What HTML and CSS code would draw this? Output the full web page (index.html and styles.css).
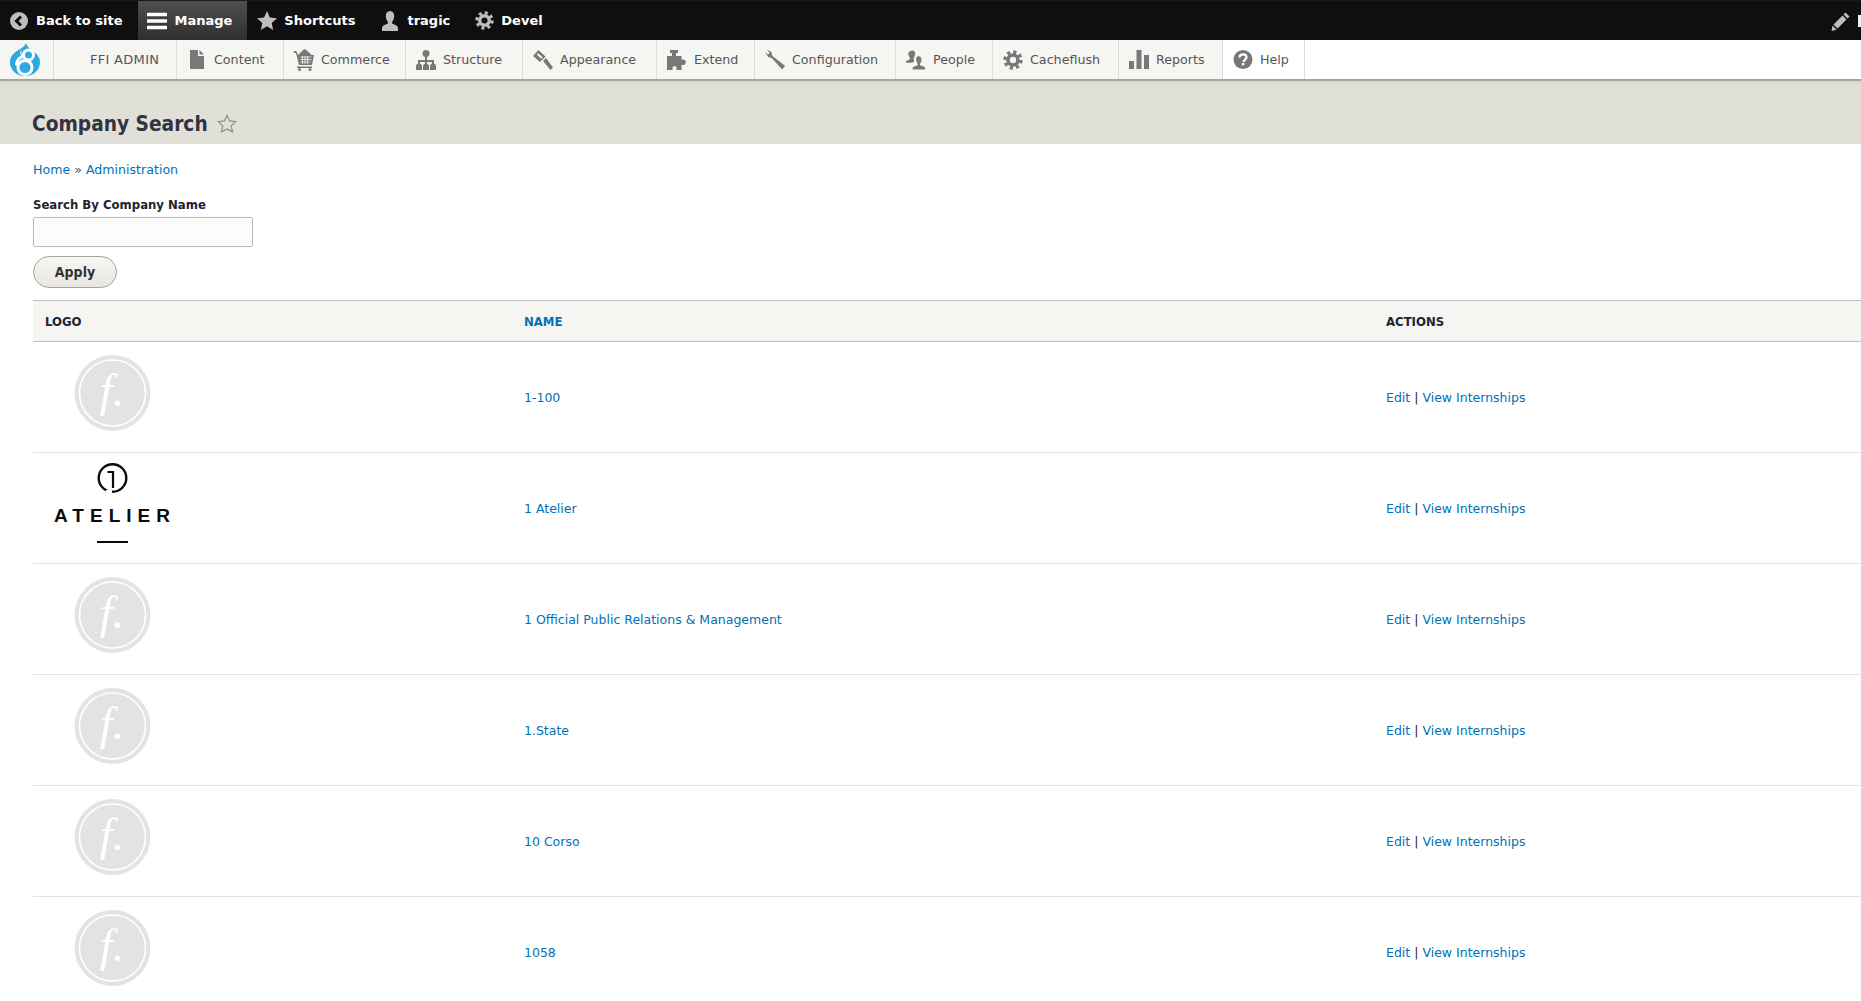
FILE: index.html
```html
<!DOCTYPE html>
<html lang="en">
<head>
    <meta charset="UTF-8" />
    <title>Company Search</title>
    <link rel="stylesheet" href="styles.css">
</head>
<body>
    <svg class="sprites" width="0" height="0">
        <symbol id="gear" viewBox="0 0 20 20">
            <circle cx="10" cy="10" r="8" fill="none" stroke="currentColor" stroke-width="3.4" stroke-dasharray="3.15 3.13"/>
            <circle cx="10" cy="10" r="5" fill="none" stroke="currentColor" stroke-width="3.6"/>
        </symbol>
        <symbol id="f-badge" viewBox="0 0 135 100">
            <circle cx="67.5" cy="50" r="37.5" fill="#e3e3e3" stroke="#e3e3e3" stroke-width="1"/>
            <circle cx="67.5" cy="50" r="33" fill="none" stroke="#fff" stroke-width="1.6"/>
        </symbol>
    </svg>

    <!-- Toolbar -->
    <nav class="toolbar">
        <a class="bar-item bar-first" href="#">
            <svg class="bar-icon" width="18" height="18" viewBox="0 0 18 18"><circle cx="9" cy="9" r="9" fill="#bebebe"/><path d="M11 4.500 6.500 9l4.500 4.500" fill="none" stroke="#0f0f0f" stroke-width="3"/></svg>
            Back to site
        </a>
        <a class="bar-item bar-active" href="#">
            <svg class="bar-icon" width="20" height="18" viewBox="0 0 20 18"><path d="M1 2.500h18M1 9h18M1 15.500h18" stroke="#fff" stroke-width="3.600" stroke-linecap="round"/></svg>
            Manage
        </a>
        <a class="bar-item" href="#">
            <svg class="bar-icon" width="20" height="19" viewBox="0 0 20 19"><path d="M10 0l2.900 6.400 7.100.8-5.300 4.700 1.500 7L10 15.300 3.800 18.900l1.500-7L0 7.200l7.100-.8z" fill="#bebebe"/></svg>
            Shortcuts
        </a>
        <a class="bar-item" href="#">
            <svg class="bar-icon" width="20" height="20" viewBox="0 0 20 20"><path d="M10 0c2.800 0 4.200 2.200 4.200 5 0 2.300-.9 4.200-1.900 5.600-.5.800-.4 2 .6 2.500 2.500 1 5.100 1.500 5.100 4.400V20H2v-2.500c0-2.900 2.600-3.400 5.100-4.400 1-.5 1.100-1.700.6-2.500C6.700 9.200 5.800 7.300 5.800 5 5.800 2.200 7.200 0 10 0z" fill="#bebebe"/></svg>
            tragic
        </a>
        <a class="bar-item" href="#">
            <svg class="bar-icon bar-gear" width="19" height="19"><use href="#gear"/></svg>
            Devel
        </a>
        <a class="bar-edit" href="#">
            <svg width="20" height="20" viewBox="0 0 20 20"><path d="M14.500 1.500l4 4-2 2-4-4zM11.500 4.500l4 4-9 9-4-4zM1.500 14.500l4 4-1 .5-4 1z" fill="#bebebe"/></svg>
        </a>
        <span class="bar-clipped"></span>
    </nav>

    <!-- Manage tray -->
    <nav class="tray">
        <a class="tray-logo" href="#">
            <svg width="30" height="33" viewBox="0 0 30 33">
                <path d="M16 0c.6 3 3 5 6 7.200C26.500 10.500 30 14 30 19c0 8-6.500 14-15 14S0 27 0 19C0 13.500 4 9.500 8.500 7 12 5 14.800 3 16 0z" fill="#2ba9e0"/>
                <path d="M12 6.500c-1.500 3-.5 5.500 1.500 8-4 1.500-6 5-5.500 9L5 22c.3-5 3-8 6-9.500-1-2-1-4.500 1-6z" fill="#fff"/>
                <circle cx="18.500" cy="12" r="6.500" fill="#fff"/>
                <circle cx="15" cy="24.500" r="8.500" fill="#fff"/>
                <circle cx="18.500" cy="12" r="3.500" fill="#2ba9e0"/>
                <circle cx="15" cy="24.500" r="5.500" fill="#2ba9e0"/>
            </svg>
        </a>
        <a class="tray-item tray-first" href="#">FFI ADMIN</a>
        <a class="tray-item" href="#">
            <svg class="tray-icon" width="20" height="19" viewBox="0 0 14 19"><path d="M0 0h8v6h6v13H0zM9.500 0 14 4.500H9.500z"/></svg>
            Content
        </a>
        <a class="tray-item" href="#">
            <svg class="tray-icon" width="20" height="22" viewBox="0 0 20 22"><path d="M0 2h2.500l1.500 4 2.500-2.500C8 2 9 1 10.500 0c1.500 1 3 2 4.500 3.500L17.500 6H20l-2 10H5L2 4H0z"/><path d="M6.500 8h11M6.500 10.500h11M6.500 13h10M8.500 7v8M11 7v8M13.500 7v8" stroke="#f5f5f2" stroke-width=".8"/><path d="M3 17.500h15v1.500H3z"/><circle cx="5.500" cy="20.500" r="1.500"/><circle cx="16" cy="20.500" r="1.500"/></svg>
            Commerce
        </a>
        <a class="tray-item" href="#">
            <svg class="tray-icon" width="20" height="20" viewBox="0 0 20 20"><circle cx="10" cy="3.500" r="3.500"/><circle cx="3" cy="16.500" r="3"/><circle cx="10" cy="16.500" r="3"/><circle cx="17" cy="16.500" r="3"/><rect y="16" width="6" height="4"/><rect x="7" y="16" width="6" height="4"/><rect x="14" y="16" width="6" height="4"/><path d="M10 5v11M3 15v-4h14v4" fill="none" stroke="#787878" stroke-width="2"/></svg>
            Structure
        </a>
        <a class="tray-item" href="#">
            <svg class="tray-icon" width="20" height="20" viewBox="0 0 20 20"><path d="M5.500 0 12.500 6.500 7 12 0 6zM10 11l3-3 7 9.500-2.500 2.500z"/><path d="M4.500 4 9 8" stroke="#f5f5f2" stroke-width="2"/></svg>
            Appearance
        </a>
        <a class="tray-item" href="#">
            <svg class="tray-icon" width="20" height="20" viewBox="0 0 20 20"><path d="M3 0h8v3H9v3h5.500v3.500H16a2.700 2.700 0 0 1 0 5.400h-1.500V20H9.500v-2a2 2 0 0 0-4 0v2H0V6h5V3H3z"/></svg>
            Extend
        </a>
        <a class="tray-item" href="#">
            <svg class="tray-icon" width="21" height="21" viewBox="0 0 21 21"><path d="M2 0l5 3 .5 3.500L21 17l-3 4L7 9 3.500 8 0 3l3 2 2-1z"/></svg>
            Configuration
        </a>
        <a class="tray-item" href="#">
            <svg class="tray-icon" width="21" height="20" viewBox="0 0 21 20"><path d="M13 6c2.200 0 3.300 1.800 3.300 3.800 0 1.700-.7 3-1.400 4.200-.4.700-.3 1.400.5 1.800 1.800.7 4.600 1 4.600 2.700V20H7v-1.500c0-1.700 2.800-2 4.600-2.700.8-.4.900-1.100.5-1.800-.7-1.200-1.400-2.500-1.400-4.200C10.700 7.800 10.800 6 13 6z"/><path d="M7 0c1.800 0 2.700 1.500 2.700 3.300 0 1.800-.8 3-1.300 4.200-.6 1.500-.3 2.500.3 3.500-.5 1-1.500 1.500-2.700 2H0v-1c0-1.300 2-1.700 3.700-2.400.7-.3.800-1 .4-1.600-.6-1-1.800-3-1.800-4.700C2.300 1.500 5.200 0 7 0z"/></svg>
            People
        </a>
        <a class="tray-item" href="#">
            <svg class="tray-icon" width="20" height="20"><use href="#gear"/></svg>
            Cacheflush
        </a>
        <a class="tray-item" href="#">
            <svg class="tray-icon" width="20" height="20" viewBox="0 0 20 20"><rect y="11" width="5" height="8"/><rect x="7.500" y="0" width="5" height="19"/><rect x="15" y="5" width="5" height="14"/></svg>
            Reports
        </a>
        <a class="tray-item tray-active" href="#">
            <svg class="tray-icon" width="20" height="19" viewBox="0 0 19 19"><circle cx="9.500" cy="9.500" r="9.500"/><path d="M6 7.500c0-2 1.500-3.200 3.500-3.200s3.500 1.200 3.500 3c0 2.500-3 2.500-3 4.700" fill="none" stroke="#fff" stroke-width="2.200"/><rect x="8.400" y="13" width="2.400" height="2.400" fill="#fff"/></svg>
            Help
        </a>
    </nav>

    <!-- Page title -->
    <header class="page-head">
        <h1>Company Search</h1>
        <svg class="fav-star" width="20" height="19" viewBox="0 0 20 19"><path d="M10 1.200l2.600 5.700 6.200.7-4.600 4.200 1.300 6.100L10 14.900 4.500 18l1.300-6.100L1.200 7.600l6.200-.7z" fill="none" stroke="#8e8e80" stroke-width="1.200"/></svg>
    </header>

    <main class="content">
        <div class="crumbs"><a href="#">Home</a> » <a href="#">Administration</a></div>

        <form class="search">
            <label for="company">Search By Company Name</label>
            <input type="text" id="company">
            <button type="button">Apply</button>
        </form>

        <table class="companies">
            <thead>
                <tr>
                    <th class="col-logo">LOGO</th>
                    <th class="col-name"><a href="#">NAME</a></th>
                    <th>ACTIONS</th>
                </tr>
            </thead>
            <tbody>
                <tr>
                    <td><svg class="logo" width="135" height="100"><use href="#f-badge"/><text x="67" y="63" class="f-letter">f.</text></svg></td>
                    <td><a href="#">1-100</a></td>
                    <td><a href="#">Edit</a> | <a href="#">View Internships</a></td>
                </tr>
                <tr>
                    <td>
                        <svg class="logo" width="135" height="100" viewBox="0 0 135 100">
                            <circle cx="67.500" cy="24" r="13.800" fill="none" stroke="#0b0b0b" stroke-width="2.400"/>
                            <path d="M62.500 18h5.500v16" fill="none" stroke="#0b0b0b" stroke-width="2.200"/>
                            <rect x="61" y="36" width="6" height="3.500" fill="#fff"/>
                            <text x="70" y="68" class="atelier">ATELIER</text>
                            <rect x="52" y="87" width="31" height="2" fill="#0b0b0b"/>
                        </svg>
                    </td>
                    <td><a href="#">1 Atelier</a></td>
                    <td><a href="#">Edit</a> | <a href="#">View Internships</a></td>
                </tr>
                <tr>
                    <td><svg class="logo" width="135" height="100"><use href="#f-badge"/><text x="67" y="63" class="f-letter">f.</text></svg></td>
                    <td><a href="#">1 Official Public Relations &amp; Management</a></td>
                    <td><a href="#">Edit</a> | <a href="#">View Internships</a></td>
                </tr>
                <tr>
                    <td><svg class="logo" width="135" height="100"><use href="#f-badge"/><text x="67" y="63" class="f-letter">f.</text></svg></td>
                    <td><a href="#">1.State</a></td>
                    <td><a href="#">Edit</a> | <a href="#">View Internships</a></td>
                </tr>
                <tr>
                    <td><svg class="logo" width="135" height="100"><use href="#f-badge"/><text x="67" y="63" class="f-letter">f.</text></svg></td>
                    <td><a href="#">10 Corso</a></td>
                    <td><a href="#">Edit</a> | <a href="#">View Internships</a></td>
                </tr>
                <tr>
                    <td><svg class="logo" width="135" height="100"><use href="#f-badge"/><text x="67" y="63" class="f-letter">f.</text></svg></td>
                    <td><a href="#">1058</a></td>
                    <td><a href="#">Edit</a> | <a href="#">View Internships</a></td>
                </tr>
            </tbody>
        </table>
    </main>
</body>
</html>
```

FILE: styles.css
```css
/* Basic Styling */
html, body { margin: 0; padding: 0; overflow: hidden; height: 100%; }
body {
    background-color: #ffffff;
    color: #222330;
    font-family: "DejaVu Sans", sans-serif;
    font-size: 12.5px;
}
a { color: #0071b8; text-decoration: none; }
.sprites { position: absolute; }

/* Toolbar */
.toolbar {
    display: flex;
    align-items: stretch;
    height: 40px;
    padding-left: 10px;
    background-color: #0f0f0f;
    border-top: 1px solid #1a1a1a;
    box-sizing: border-box;
}
.bar-item {
    display: flex;
    align-items: center;
    gap: 7px;
    padding-right: 25px;
    color: #ffffff;
    font-size: 13px;
    font-weight: bold;
}
.bar-first { gap: 8px; padding-right: 16px; }
.bar-icon { flex: none; }
.bar-gear { color: #bebebe; }
.bar-active {
    margin-right: 10px;
    padding: 0 15px 0 9px;
    background-image: linear-gradient(#4f4f4f, #2f2f2f);
}
.bar-edit { display: flex; align-items: center; margin-left: auto; padding-right: 7px; }
.bar-clipped { width: 3px; height: 12px; margin-top: 14px; background-color: #e8f1fb; }

/* Manage tray */
.tray {
    display: grid;
    grid-template-columns: 54px 123px 107px 122px 117px 134px 98px 141px 97px 126px 104px 82px 1fr;
    height: 39px;
    background-color: #ffffff;
    border-bottom: 2px solid #a4a49c;
}
.tray-logo {
    display: flex;
    align-items: center;
    justify-content: center;
    padding-right: 3px;
    background-color: #f5f5f2;
    border-right: 1px solid #dcdcd8;
}
.tray-item {
    display: flex;
    align-items: center;
    gap: 7px;
    padding-left: 10px;
    background-color: #f5f5f2;
    border-right: 1px solid #dcdcd8;
    color: #565656;
    font-size: 12.700px;
    white-space: nowrap;
}
.tray-first { padding-left: 36px; font-size: 13px; letter-spacing: .3px; }
.tray-active { background-color: #ffffff; }
.tray-icon { flex: none; width: 20px; fill: #787878; color: #787878; }

/* Page title */
.page-head {
    display: flex;
    align-items: center;
    gap: 9px;
    height: 63px;
    padding: 22px 0 0 32px;
    background-image: linear-gradient(#d8d8d0, #e0e0d8 5px);
    box-sizing: border-box;
}
.page-head h1 {
    margin: 0;
    color: #333340;
    font-family: "DejaVu Sans Condensed", "DejaVu Sans", sans-serif;
    font-size: 20.700px;
    font-weight: bold;
}

/* Form */
.content { padding: 18px 0 0 33px; }
.crumbs { height: 16px; font-size: 12.600px; line-height: 16px; color: #555; }
.search { display: flex; flex-direction: column; align-items: flex-start; margin-top: 19px; }
.search label {
    font-family: "DejaVu Sans Condensed", "DejaVu Sans", sans-serif;
    font-size: 13px;
    font-weight: bold;
    line-height: 16px;
    margin-bottom: 4px;
}
.search input {
    width: 220px;
    height: 30px;
    box-sizing: border-box;
    background-color: #fcfcfa;
    border: 1px solid #b8b8b8;
    border-radius: 2px;
}
.search button {
    width: 84px;
    height: 32px;
    margin-top: 9px;
    color: #333;
    font-family: "DejaVu Sans Condensed", "DejaVu Sans", sans-serif;
    font-size: 14px;
    font-weight: bold;
    background-image: linear-gradient(#f6f6f3, #e7e7df);
    border: 1px solid #a6a69e;
    border-radius: 20px;
}

/* Companies table */
.companies {
    width: 1828px;
    margin-top: 12px;
    table-layout: fixed;
    border-collapse: collapse;
}
.companies th {
    height: 40px;
    padding: 0 12px;
    background-color: #f5f5f2;
    border-top: 1px solid #bfbfba;
    border-bottom: 1px solid #bfbfba;
    font-family: "DejaVu Sans Condensed", "DejaVu Sans", sans-serif;
    font-size: 13px;
    text-align: left;
}
.col-logo { width: 455px; }
.col-name { width: 838px; }
.companies td {
    height: 110px;
    padding: 0 12px;
    border-bottom: 1px solid #e6e4df;
}
.logo { display: block; margin-top: -8px; }
.f-letter { fill: #fff; font-family: "Liberation Serif", serif; font-style: italic; font-size: 46px; text-anchor: middle; }
.atelier { fill: #0b0b0b; font-family: "Liberation Sans", sans-serif; font-weight: bold; font-size: 19px; letter-spacing: 6px; text-anchor: middle; }
```
